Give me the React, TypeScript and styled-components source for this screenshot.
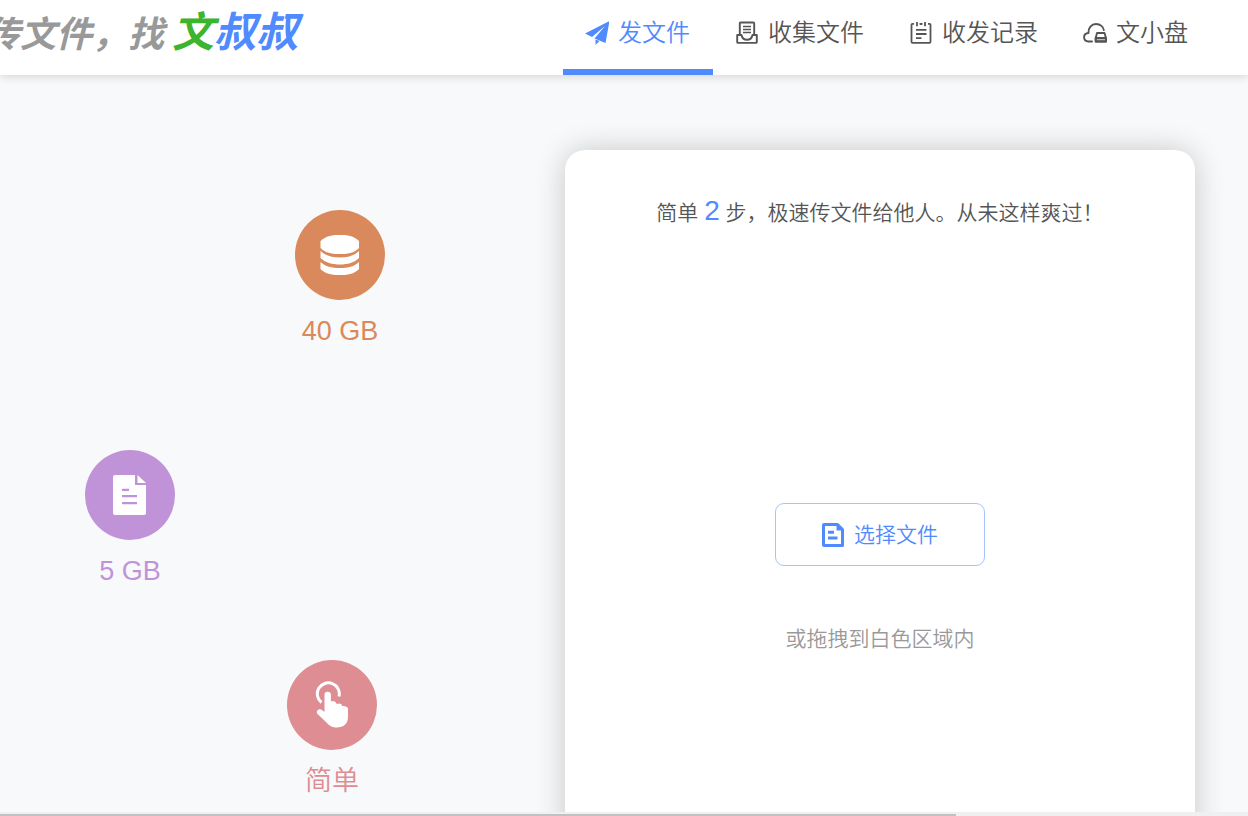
import React from "react";
import styled, { createGlobalStyle } from "styled-components";

const BLUE = "#508aff";

const GlobalStyle = createGlobalStyle`
  *, *::before, *::after { box-sizing: border-box; }
  body {
    margin: 0;
    background: #f8f9fb;
    color: #555;
    font-family: "Liberation Sans", "Noto Sans CJK SC", sans-serif;
    font-weight: 350;
  }
`;

const Page = styled.div`
  display: flex;
  flex-direction: column;
  height: 100vh;
  overflow: hidden;
`;

const Header = styled.header`
  flex: none;
  display: flex;
  justify-content: space-between;
  height: 75px;
  padding-right: 37px;
  background: #fff;
  box-shadow: 0 2px 8px rgba(0, 0, 0, 0.14);
  z-index: 1;
`;

const Logo = styled.a`
  display: flex;
  align-items: baseline;
  margin-left: -16px;
  font-style: italic;
  font-weight: 700;
  line-height: 66px;
  white-space: nowrap;
  text-decoration: none;
`;

const Slogan = styled.span`
  margin-right: 8px;
  font-size: 36px;
  color: #999;
`;

const Brand = styled.span<{ $color: string }>`
  font-size: 42px;
  color: ${(p) => p.$color};
`;

const Nav = styled.nav`
  display: flex;
`;

const NavLink = styled.a<{ $active?: boolean }>`
  display: flex;
  align-items: center;
  gap: 9px;
  padding: 0 23px 4px 22px;
  border-bottom: 6px solid ${(p) => (p.$active ? BLUE : "transparent")};
  color: ${(p) => (p.$active ? BLUE : "#555")};
  font-size: 24px;
  line-height: 32px;
  white-space: nowrap;
  text-decoration: none;
`;

const Main = styled.main`
  flex: 1;
  min-height: 0;
  display: flex;
  justify-content: space-between;
  padding: 75px 53px 0 85px;
`;

const Features = styled.ul`
  margin: 60px 0 0;
  padding: 0;
  list-style: none;
`;

const Feature = styled.li<{ $color: string; $indent: number; $gap: number }>`
  display: flex;
  flex-direction: column;
  align-items: center;
  width: 90px;
  height: 140px;
  margin: 0 0 ${(p) => p.$gap}px ${(p) => p.$indent}px;
  color: ${(p) => p.$color};
  font-size: 27px;
  line-height: 32px;
  white-space: nowrap;
`;

const Disc = styled.span<{ $color: string }>`
  display: flex;
  align-items: center;
  justify-content: center;
  width: 90px;
  height: 90px;
  margin-bottom: 15px;
  border-radius: 50%;
  background: ${(p) => p.$color};
  color: #fff;
`;

const Card = styled.section`
  flex: none;
  display: flex;
  flex-direction: column;
  align-items: center;
  width: 630px;
  height: 800px;
  border-radius: 20px;
  background: #fff;
  box-shadow: 0 0 30px rgba(0, 0, 0, 0.2);
  font-size: 21px;
`;

const Intro = styled.p`
  margin: 40px 0 0;
  line-height: 42px;
  white-space: nowrap;
`;

const Step = styled.span`
  font-size: 28px;
  color: ${BLUE};
`;

const PickButton = styled.button`
  display: flex;
  align-items: center;
  justify-content: center;
  gap: 10px;
  width: 210px;
  height: 63px;
  margin-top: 269px;
  padding: 0;
  border: 1px solid #a6c3ff;
  border-radius: 9px;
  background: #fff;
  color: ${BLUE};
  font: inherit;
  line-height: 32px;
  cursor: pointer;
`;

const Hint = styled.p`
  margin: 57px 0 0;
  line-height: 32px;
  color: #999;
`;

const Track = styled.div`
  flex: none;
  height: 4px;
  padding-top: 2px;
  background: #f0f0f0;
  z-index: 1;
`;

const Thumb = styled.div`
  width: 76.6%;
  height: 2px;
  background: #c1c1c1;
`;

const PlaneIcon = () => (
  <svg width="24" height="24" viewBox="0 0 24 24" fill="currentColor" aria-hidden="true">
    <path d="M24.500 0 0 12.500l7 3.500L20 5 9.500 17.500 20.500 22z" />
    <path d="M10.500 18.500V24l4-4z" />
  </svg>
);

const InboxIcon = () => (
  <svg width="24" height="24" viewBox="0 0 24 24" fill="none" stroke="currentColor" strokeWidth="1.900" strokeLinejoin="round" aria-hidden="true">
    <path d="M4.800 13V2.500q0-1 1-1h12.400q1 0 1 1V13" />
    <path d="M2.200 14H6.500q1 4.800 5.500 4.800t5.500-4.800h4.300v7q0 .9-.9.900H3.100q-.9 0-.9-.9z" />
    <path d="M8 5.500h8M8 8.500h8M8 11.500h8" strokeWidth="1.300" />
  </svg>
);

const NotesIcon = () => (
  <svg width="24" height="24" viewBox="0 0 24 24" fill="none" stroke="currentColor" strokeWidth="1.800" aria-hidden="true">
    <path d="M5 2.800H3.500q-1 0-1 1v17q0 1 1 1h17q1 0 1-1v-17q0-1-1-1H19M10.500 2.800h3" />
    <path d="M8 1v4.200M16 1v4.200M12 2v2" />
    <path d="M7 8.800h10.500M7 13h10.500M7 17.200h5.500" />
  </svg>
);

const CloudDiskIcon = () => (
  <svg width="24" height="24" viewBox="0 0 24 24" fill="none" stroke="currentColor" strokeWidth="1.900" strokeLinecap="round" strokeLinejoin="round" aria-hidden="true">
    <path d="M9 20.500H5.500C-.5 20-.3 12.500 5.500 12 5 7 8.500 3 13 3s7.500 3 7.800 6" />
    <path d="M14 12h7.500l1.500 5v3.500H12.700V17z" />
    <path d="M12.700 17H23v3.500H12.700z" fill="currentColor" fillOpacity="0.4" />
  </svg>
);

const DatabaseIcon = () => (
  <svg width="40" height="42" viewBox="0 0 40 42" fill="currentColor" aria-hidden="true">
    <path d="M.5 7C5 2.500 12 1 18 1h4c6 0 12.500 1.500 17 6v7c-4 4.500-11 6-17 6h-4C12 20 4.500 18.500.5 14z" />
    <path d="M.5 17C5 21.500 12 23.500 20 23.500S34.500 21.500 39 17v7c-4.500 4.500-11.500 6.500-19 6.500S5 28.500.5 24z" />
    <path d="M.5 28C5 32.500 12 34 20 34s14.500-1.500 19-6v7c-4 4.500-11 6-17 6h-4C12 41 4.500 39.500.5 35z" />
  </svg>
);

const DocumentIcon = () => (
  <svg width="34" height="40" viewBox="0 0 34 40" fill="currentColor" aria-hidden="true">
    <path
      fillRule="evenodd"
      d="M2 0h20v10h11v28q0 2-2 2H2q-2 0-2-2V2Q0 0 2 0zM9 13.800v2.200h7v-2.200zM9 20v2.200h15V20zM9 27v2.200h15V27z"
    />
    <path d="M24.500 0 33 8h-8.500z" />
  </svg>
);

const TapIcon = () => (
  <svg width="34" height="48" viewBox="0 0 34 48" aria-hidden="true">
    <path d="M6.500 21.500A11 11 0 1 1 24 15.500" fill="none" stroke="currentColor" strokeWidth="3" />
    <path
      fill="currentColor"
      d="M9.500 31V14a3.200 3.200 0 0 1 6.400 0v6.500q4-1.500 6 2.500 4-1.500 5.500 2 3.500-.5 5.600 2v9c0 6.500-4.500 10.500-11 10.500-5 0-7.500-1.500-10.500-5L2.500 33C.5 30 4 26.500 7 29z"
    />
  </svg>
);

const FileIcon = () => (
  <svg width="22" height="24" viewBox="0 0 22 24" fill="none" stroke="currentColor" strokeWidth="3" aria-hidden="true">
    <path d="M2 1.500h13.500l5 5v16h-18.500q-.5 0-.5-.5V2q0-.5.5-.5z" strokeLinejoin="round" />
    <path d="M14.500 1v6.500H21z" fill="currentColor" stroke="none" />
    <path d="M6 9.200h6M6 15h9.500" />
  </svg>
);

const navItems = [
  { label: "发文件", icon: <PlaneIcon />, active: true },
  { label: "收集文件", icon: <InboxIcon /> },
  { label: "收发记录", icon: <NotesIcon /> },
  { label: "文小盘", icon: <CloudDiskIcon /> },
];

const features = [
  { label: "40 GB", color: "#d9895b", indent: 210, gap: 100, icon: <DatabaseIcon /> },
  { label: "5 GB", color: "#c093d9", indent: 0, gap: 70, icon: <DocumentIcon /> },
  { label: "简单", color: "#de8d93", indent: 202, gap: 0, icon: <TapIcon /> },
];

export default function App() {
  return (
    <>
      <GlobalStyle />
      <Page>
        <Header>
          <Logo href="#">
            <Slogan>传文件，找</Slogan>
            <Brand $color="#3cb42d">文</Brand>
            <Brand $color={BLUE}>叔叔</Brand>
          </Logo>
          <Nav>
            {navItems.map((item) => (
              <NavLink key={item.label} href="#" $active={item.active}>
                {item.icon}
                {item.label}
              </NavLink>
            ))}
          </Nav>
        </Header>
        <Main>
          <Features>
            {features.map((f) => (
              <Feature key={f.label} $color={f.color} $indent={f.indent} $gap={f.gap}>
                <Disc $color={f.color}>{f.icon}</Disc>
                {f.label}
              </Feature>
            ))}
          </Features>
          <Card>
            <Intro>
              简单 <Step>2</Step> 步，极速传文件给他人。从未这样爽过！
            </Intro>
            <PickButton type="button">
              <FileIcon />
              选择文件
            </PickButton>
            <Hint>或拖拽到白色区域内</Hint>
          </Card>
        </Main>
        <Track>
          <Thumb />
        </Track>
      </Page>
    </>
  );
}
